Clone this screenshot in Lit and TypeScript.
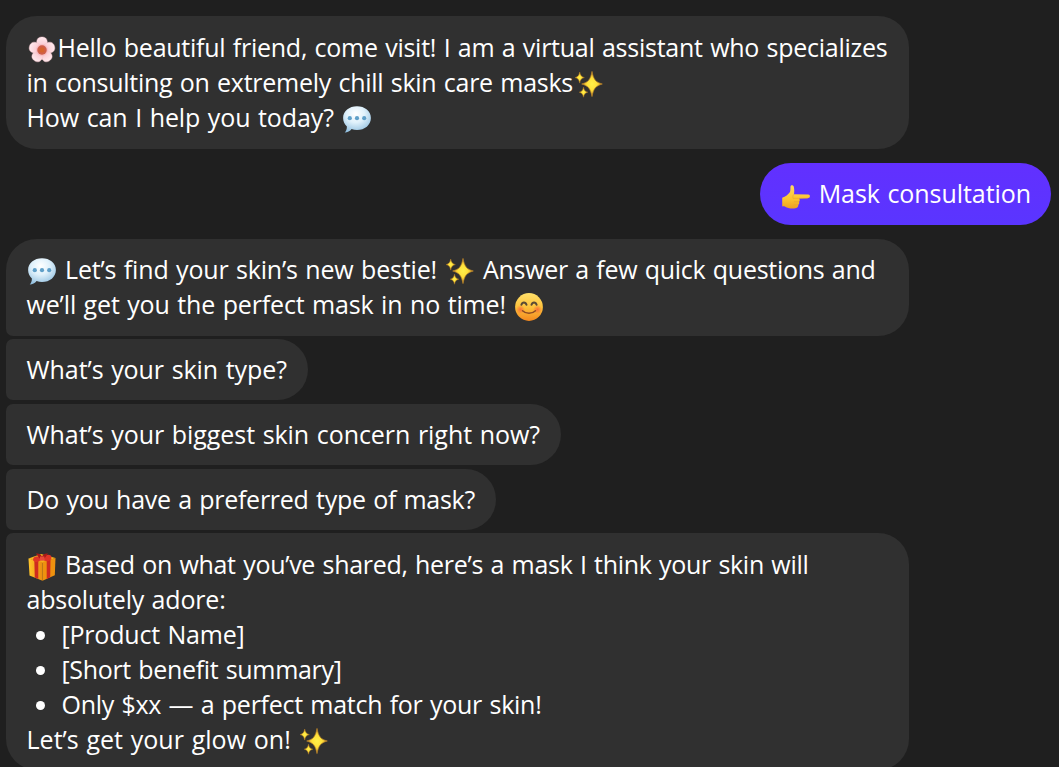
import { LitElement, html, svg, css, SVGTemplateResult } from 'lit';
import { customElement, property } from 'lit/decorators.js'

type EmojiName = 'blossom' | 'sparkles' | 'speech' | 'point' | 'smile' | 'gift';

interface Run {
  text?: string;
  width?: number;
  emoji?: EmojiName;
}

interface Line {
  runs: Run[];
  bullet?: boolean;
}

interface Message {
  kind: string;
  lines: Line[];
}

const t = (text: string, width: number): Run => ({ text, width });
const e = (emoji: EmojiName): Run => ({ emoji });

const MESSAGES: Message[] = [
  {
    kind: 'single wide',
    lines: [
      { runs: [e('blossom'), t('Hello beautiful friend, come visit! I am a virtual assistant who specializes', 830)] },
      { runs: [t('in consulting on extremely chill skin care masks', 546.5), e('sparkles')] },
      { runs: [t('How can I help you today? ', 315), e('speech')] },
    ],
  },
  {
    kind: 'own',
    lines: [{ runs: [e('point'), t(' Mask consultation', 220)] }],
  },
  {
    kind: 'first wide',
    lines: [
      { runs: [e('speech'), t(' Let’s find your skin’s new bestie! ', 387), e('sparkles'), t(' Answer a few quick questions and', 400)] },
      { runs: [t('we’ll get you the perfect mask in no time! ', 487), e('smile')] },
    ],
  },
  { kind: 'middle', lines: [{ runs: [t('What’s your skin type?', 260.5)] }] },
  { kind: 'middle', lines: [{ runs: [t('What’s your biggest skin concern right now?', 513.5)] }] },
  { kind: 'middle', lines: [{ runs: [t('Do you have a preferred type of mask?', 448.5)] }] },
  {
    kind: 'last wide',
    lines: [
      { runs: [e('gift'), t(' Based on what you’ve shared, here’s a mask I think your skin will', 751)] },
      { runs: [t('absolutely adore:', 199)] },
      { bullet: true, runs: [t('[Product Name]', 183)] },
      { bullet: true, runs: [t('[Short benefit summary]', 280)] },
      { bullet: true, runs: [t('Only $xx — a perfect match for your skin!', 480)] },
      { runs: [t('Let’s get your glow on! ', 272), e('sparkles')] },
    ],
  },
];

const STAR = 'M0-1C.16-.34.34-.16 1 0C.34.16.16.34 0 1C-.16.34-.34.16-1 0C-.34-.16-.16-.34 0-1Z';

const EMOJI: Record<EmojiName, SVGTemplateResult> = {
  blossom: svg`
    <defs>
      <radialGradient id="g" gradientUnits="userSpaceOnUse" cx="14" cy="14" r="13">
        <stop offset=".3" stop-color="#f0a3aa"/><stop offset=".5" stop-color="#fbd0d8"/><stop offset="1" stop-color="#ffeaee"/>
      </radialGradient>
    </defs>
    ${[0, 72, 144, 216, 288].map(a => svg`
      <path fill="url(#g)" stroke="#f0bcc4" stroke-width=".4" transform="rotate(${a} 14 14)"
        d="M14 15C10.500 12 8.300 9 8.700 5.500C9 2 11.500.9 14 .9C16.500.9 19 2 19.300 5.500C19.700 9 17.500 12 14 15Z"/>`)}
    <circle cx="14" cy="14" r="4.700" fill="#cf5f48"/>
    <circle cx="14" cy="14" r="2.500" fill="#d5622d"/>`,
  sparkles: svg`
    <defs>
      <radialGradient id="g"><stop offset="0" stop-color="#fff04a"/><stop offset=".5" stop-color="#ffdf38"/><stop offset="1" stop-color="#c98a2c"/></radialGradient>
    </defs>
    <path fill="url(#g)" stroke="#bd8527" stroke-width=".06" transform="translate(17 13) scale(10.300 12.600)" d="${STAR}"/>
    <path fill="url(#g)" stroke="#bd8527" stroke-width=".1" transform="translate(4.700 6.600) scale(4.600 5.500)" d="${STAR}"/>
    <path fill="url(#g)" stroke="#bd8527" stroke-width=".1" transform="translate(8.500 21.200) scale(4.300 5)" d="${STAR}"/>`,
  speech: svg`
    <defs>
      <radialGradient id="g" cx=".45" cy=".3" r=".72">
        <stop offset="0" stop-color="#fff"/><stop offset=".45" stop-color="#e0f1fb"/><stop offset="1" stop-color="#92c0e0"/>
      </radialGradient>
    </defs>
    <path fill="url(#g)" d="M14 .2C21.800.2 27.900 5 27.900 11.900S21.800 24 14 24C12 24 10.200 23.700 8.600 23.100C7 25.300 4.500 26.500 1.700 26.500C3.100 25 3.900 23.200 3.900 20.400C1.600 18.300.1 15.400.1 11.900C.1 5 6.200.2 14 .2Z"/>
    <g fill="#5f9fc8"><circle cx="6.800" cy="12.200" r="2.100"/><circle cx="14" cy="12.200" r="2.100"/><circle cx="21.200" cy="12.200" r="2.100"/></g>`,
  point: svg`
    <defs>
      <linearGradient id="g" x2="0" y2="1"><stop offset="0" stop-color="#ffda62"/><stop offset=".6" stop-color="#fcc42f"/><stop offset="1" stop-color="#eda023"/></linearGradient>
    </defs>
    <g transform="translate(0 1.500)">
      <path fill="url(#g)" d="M.2 14.200C3.500 13 6.200 11.200 8 8.500C8.700 6.500 8.300 4.500 8.500 3C8.800 1.200 11.400 1.300 11.800 3.200C12.400 5.800 12.400 8 12 10.800L26.300 10.900C28.500 11 28.500 14.300 26.300 14.400L17 14.900C18.200 16 17.900 17.500 17 18.200C17.700 19.500 17.200 20.700 16.200 21.300C16.500 22.600 15.800 24 14.300 24.400C10.500 25.500 6 25 3.200 23.200C2 22.700 1 22.900.2 22.900Z"/>
      <path fill="none" stroke="#e8a52b" stroke-width=".6" stroke-linecap="round" d="M11.500 11.200C10.600 12.500 10.600 14 11.300 15.200M12 14.800H25.500M12.300 18.200H16.800M12 21.300H16"/>
    </g>`,
  smile: svg`
    <defs>
      <linearGradient id="g" x2="0" y2="1"><stop offset="0" stop-color="#ffe06a"/><stop offset=".5" stop-color="#fdc23c"/><stop offset="1" stop-color="#f3881f"/></linearGradient>
      <radialGradient id="b"><stop offset="0" stop-color="#f7603a" stop-opacity=".8"/><stop offset="1" stop-color="#f7603a" stop-opacity="0"/></radialGradient>
    </defs>
    <circle cx="14" cy="14" r="13.900" fill="url(#g)"/>
    <circle cx="5.500" cy="16.500" r="4.500" fill="url(#b)"/>
    <circle cx="22.500" cy="16.500" r="4.500" fill="url(#b)"/>
    <g fill="none" stroke="#5b4b35" stroke-linecap="round">
      <path stroke-width="2" d="M6.400 11.800C7.300 8.800 10.600 8.800 11.500 11.800M16.500 11.800C17.400 8.800 20.700 8.800 21.600 11.800"/>
      <path stroke="#8c4a24" stroke-width="1.500" d="M7.500 17.800C11 21.200 17 21.200 20.500 17.800"/>
    </g>`,
  gift: svg`
    <defs>
      <linearGradient id="g"><stop offset="0" stop-color="#ffc52b"/><stop offset="1" stop-color="#e98c10"/></linearGradient>
    </defs>
    <path fill="#f6b51f" d="M.5 5.500L13 1L27.500 5L14.500 10Z"/>
    <path fill="url(#g)" d="M.5 5.500L14.500 9V27.800L1.500 22.500Z"/>
    <path fill="#ee920f" d="M14.500 9L27.500 5L26.800 22.300L14.500 27.800Z"/>
    <path fill="#cf2a1f" d="M6.300 6.500L10.300 7.500V26L6.800 24.600ZM18.700 7.500L22.500 6.500L22.200 24.300L18.700 26Z"/>
    <path fill="#df3426" d="M14 6C10 10 6.500 9.500 5.200 7.500C4.500 4.500 7 1.500 14 5C18 .5 24 1 23.500 5C23 8.500 18 9.500 14 6Z"/>
    <path fill="#a81a18" d="M8 .5C11 .2 13 1.500 14 3.500C15 1.500 17 .2 20 .5L17 4.800L14 7.500L11 4.800Z"/>
    <path fill="#e9493a" d="M12 3.500H16.300L16.800 7.500H11.600Z"/>`,
};

@customElement('chat-emoji')
export class ChatEmoji extends LitElement {
  static styles = css`
    :host {
      display: inline-block;
      width: 28px;
      height: 28px;
      margin: 0 1.5px;
      vertical-align: -7px;
    }
    svg {
      display: block;
      overflow: visible;
    }
  `;

  @property({ type: String })
  name: EmojiName = 'smile'

  render() {
    return html`<svg width="28" height="28" viewBox="0 0 28 28">${EMOJI[this.name]}</svg>`;
  }
}

@customElement('chat-bubble')
export class ChatBubble extends LitElement {
  static styles = css`
    :host {
      display: block;
      box-sizing: border-box;
      flex: none;
      width: fit-content;
      padding: 13px 20.5px;
      border-radius: 31px;
      background: #303030;
      color: #fff;
    }
    .line {
      display: block;
      height: 35px;
      line-height: 35px;
      white-space: pre;
      word-spacing: 1.2px;
    }
    .bullet {
      display: flex;
      align-items: center;
    }
    .dot {
      width: 9px;
      height: 9px;
      margin: 2px 17px 0 9px;
      border-radius: 50%;
      background: #fff;
    }
  `;

  @property({ attribute: false })
  lines: Line[] = []

  render() {
    return html`${this.lines.map(line => this._lineHtml(line))}`;
  }

  _lineHtml(line: Line) {
    const dot = line.bullet ? html`<span class="dot"></span>` : '';
    return html`<div class="line ${line.bullet ? 'bullet' : ''}">${dot}${line.runs.map(run => run.emoji
      ? html`<chat-emoji name=${run.emoji}></chat-emoji>`
      : html`<span class="run" data-width=${run.width!}>${run.text}</span>`)}</div>`;
  }

  // Track each run so that it fills its set width
  updated() {
    this.shadowRoot?.querySelectorAll<HTMLElement>('.run').forEach(run => {
      const length = run.textContent!.length;
      const spare = Number(run.dataset.width) - run.getBoundingClientRect().width;
      run.style.letterSpacing = `${spare / length}px`;
    });
  }
}

@customElement('app-root')
export class AppRoot extends LitElement {
  static styles = css`
    :host {
      display: block;
      height: 767px;
      overflow: hidden;
      background: #1f1f1f;
      font-family: "Open Sans", "Noto Sans", sans-serif;
      font-size: 25px;
    }
    .thread {
      display: flex;
      flex-direction: column;
      align-items: flex-start;
      padding: 16px 8px 0 6px;
    }
    .wide {
      width: 903px;
    }
    .single {
      padding: 14px 20.5px;
      margin-bottom: 14px;
    }
    .own {
      align-self: flex-end;
      margin-bottom: 14px;
      padding: 13px 20px 14px;
      background: linear-gradient(#6230ff, #5a35ff);
    }
    .first {
      height: 97px;
      margin-bottom: 3px;
      border-bottom-left-radius: 7px;
    }
    .middle {
      margin-bottom: 4px;
      border-top-left-radius: 7px;
      border-bottom-left-radius: 7px;
    }
    .last {
      margin-top: -1px;
      padding-top: 14px;
      border-top-left-radius: 7px;
    }
  `;

  render() {
    return html`
      <div class="thread">
        ${MESSAGES.map(message => html`<chat-bubble class=${message.kind} .lines=${message.lines}></chat-bubble>`)}
      </div>
    `;
  }
}

declare global {
  interface HTMLElementTagNameMap {
    'app-root': AppRoot
    'chat-bubble': ChatBubble
    'chat-emoji': ChatEmoji
  }
}
